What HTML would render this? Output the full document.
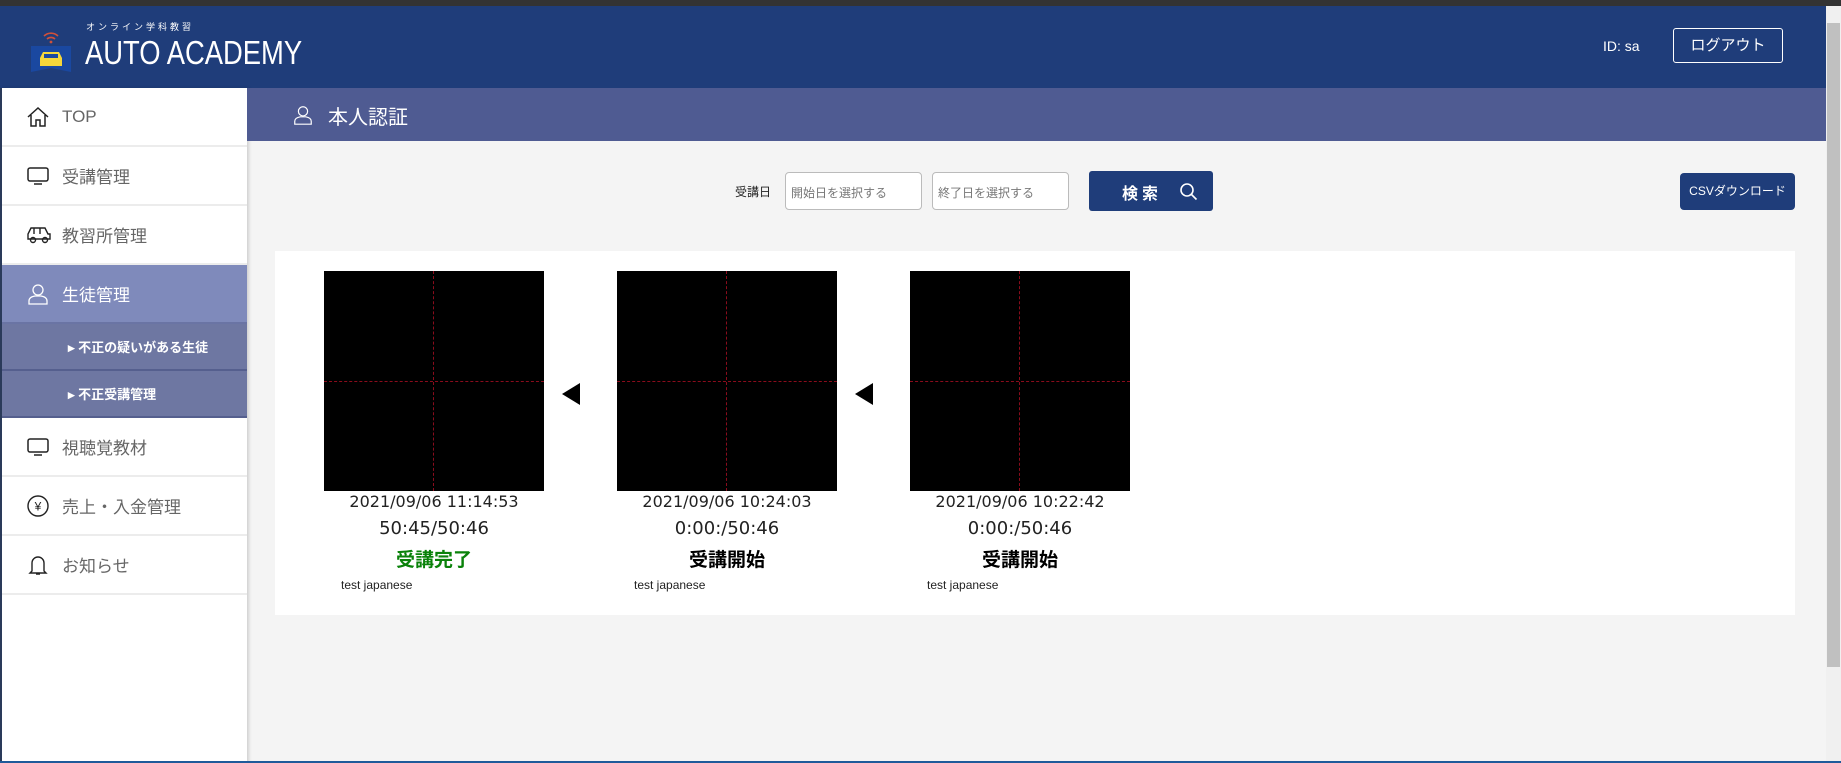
<!DOCTYPE html>
<html><head><meta charset="utf-8"><style>
*{box-sizing:border-box;margin:0;padding:0}
body{width:1841px;height:763px;overflow:hidden;background:#f4f4f4;font-family:"Liberation Sans","Noto Sans CJK JP",sans-serif;position:relative}
.a{position:absolute}
.topbar{left:0;top:0;width:1841px;height:6px;background:#333}
.header{left:0;top:6px;width:1826px;height:82px;background:#1f3d7a}
.side{left:0;top:88px;width:247px;height:675px;background:#fff;border-left:2px solid #2a3a5a;box-shadow:2px 0 3px rgba(0,0,0,.15)}
.item{position:absolute;left:0;width:245px;height:59px;border-bottom:2px solid #ececec;color:#666;font-size:17px;display:flex;align-items:center}
.item svg{position:absolute;left:24px}
.item span{position:absolute;left:60px}
.sub{position:absolute;left:0;width:245px;height:47px;background:#6e77a2;border-bottom:2px solid #555f8e;color:#fff;font-size:13px;font-weight:bold;display:flex;align-items:center}
.sub span{position:absolute;left:66px}
.title{left:247px;top:88px;width:1579px;height:53px;background:#4f5b92;color:#fff;font-size:20px}
.img{width:220px;height:220px;background:#000;top:271px}
.img:before{content:"";position:absolute;left:109px;top:0;height:220px;border-left:1px dashed #8a0c1c}
.img:after{content:"";position:absolute;top:110px;left:0;width:220px;border-top:1px dashed #8a0c1c}
.cap{width:220px;text-align:center;color:#222;font-family:"DejaVu Sans","Noto Sans CJK JP",sans-serif}
.arrow{width:0;height:0;border-top:11px solid transparent;border-bottom:11px solid transparent;border-right:18px solid #000;top:383px}
</style></head><body>
<div class="a topbar"></div>
<div class="a header">
 <svg class="a" style="left:28px;top:20px" width="46" height="50" viewBox="0 0 46 50">
  <path d="M16 10 a10 10 0 0 1 14 0 M19 13 a6 6 0 0 1 8 0" stroke="#d0503a" stroke-width="1.6" fill="none"/><circle cx="23" cy="16" r="1.4" fill="#d0503a"/>
  <path d="M3 20 h40 v26 l-20 -4 l-20 4z" fill="#1a48a0"/>
  <path d="M12 32 l3 -6 h16 l3 6 v8 h-22z" fill="#f5d63a"/><rect x="16" y="28" width="14" height="4" fill="#1a48a0"/>
 </svg>
 <div class="a" style="left:86px;top:14px;color:#fff;font-size:9px;letter-spacing:3px">オンライン学科教習</div>
 <div class="a" style="left:85px;top:28px;color:#fff;font-size:33px;font-weight:300;transform:scaleX(0.83);transform-origin:0 0">AUTO ACADEMY</div>
 <div class="a" style="left:1603px;top:32px;color:#fff;font-size:14px">ID: sa</div>
 <div class="a" style="left:1673px;top:22px;width:110px;height:35px;border:1px solid #fff;border-radius:3px;color:#fff;font-size:15px;text-align:center;line-height:33px">ログアウト</div>
</div>
<div class="a side">
 <div class="item" style="top:0"><svg width="24" height="22" viewBox="0 0 24 22" fill="none" stroke="#222" stroke-width="1.5"><path d="M2 11 L12 2 L22 11 M5 9 v11 h5 v-6 h4 v6 h5 v-11"/></svg><span>TOP</span></div>
 <div class="item" style="top:59px"><svg width="24" height="22" viewBox="0 0 24 22" fill="none" stroke="#222" stroke-width="1.5"><rect x="2" y="3" width="20" height="13" rx="2"/><path d="M8 19 h8"/></svg><span>受講管理</span></div>
 <div class="item" style="top:118px"><svg width="26" height="22" viewBox="0 0 26 22" fill="none" stroke="#222" stroke-width="1.4"><path d="M2 15 v-5 l3 -6 h14 l3 6 h2 v5z M8 4 v6 M14 4 v6"/><circle cx="7" cy="16" r="2.5"/><circle cx="19" cy="16" r="2.5"/></svg><span>教習所管理</span></div>
 <div class="item" style="top:177px;background:#7f8abb;color:#fff;border-bottom:2px solid #6a74a4"><svg width="24" height="24" viewBox="0 0 24 24" fill="none" stroke="#fff" stroke-width="1.3"><circle cx="12" cy="8" r="5"/><path d="M3 22 v-3 q0 -4 6 -5 h6 q6 1 6 5 v3z"/></svg><span>生徒管理</span></div>
 <div class="sub" style="top:236px"><span>▸ 不正の疑いがある生徒</span></div>
 <div class="sub" style="top:283px"><span>▸ 不正受講管理</span></div>
 <div class="item" style="top:330px"><svg width="24" height="22" viewBox="0 0 24 22" fill="none" stroke="#222" stroke-width="1.5"><rect x="2" y="3" width="20" height="13" rx="2"/><path d="M8 19 h8"/></svg><span>視聴覚教材</span></div>
 <div class="item" style="top:389px"><svg width="24" height="24" viewBox="0 0 24 24" fill="none" stroke="#222" stroke-width="1.4"><circle cx="12" cy="12" r="10"/><text x="12" y="16.5" font-size="12" text-anchor="middle" fill="#222" stroke="none">¥</text></svg><span>売上・入金管理</span></div>
 <div class="item" style="top:448px"><svg width="24" height="24" viewBox="0 0 24 24" fill="none" stroke="#222" stroke-width="1.4"><path d="M6 18 v-8 a6 6 0 0 1 12 0 v8 l2 2 h-16z M10 21 h4"/></svg><span>お知らせ</span></div>
</div>
<div class="a title">
 <svg class="a" style="left:45px;top:15px" width="22" height="24" viewBox="0 0 24 24" fill="none" stroke="#fff" stroke-width="1.3"><circle cx="12" cy="8" r="5"/><path d="M3 22 v-3 q0 -4 6 -5 h6 q6 1 6 5 v3z"/></svg>
 <div class="a" style="left:81px;top:13px">本人認証</div>
</div>
<div class="a" style="left:735px;top:183px;font-size:12px;color:#222">受講日</div>
<div class="a" style="left:785px;top:172px;width:137px;height:38px;background:#fff;border:1px solid #bbb;border-radius:4px;font-size:12px;color:#777;padding:11px 5px">開始日を選択する</div>
<div class="a" style="left:932px;top:172px;width:137px;height:38px;background:#fff;border:1px solid #bbb;border-radius:4px;font-size:12px;color:#777;padding:11px 5px">終了日を選択する</div>
<div class="a" style="left:1089px;top:171px;width:124px;height:40px;background:#1f3d7a;border-radius:3px;color:#fff;font-size:16px;font-weight:bold;letter-spacing:4px;padding:9px 0 0 33px">検索
 <svg class="a" style="left:90px;top:11px" width="20" height="20" viewBox="0 0 20 20" fill="none" stroke="#fff" stroke-width="1.6"><circle cx="8" cy="8" r="6"/><path d="M12.5 12.5 l5 5"/></svg></div>
<div class="a" style="left:1680px;top:173px;width:115px;height:37px;background:#1f3d7a;border-radius:4px;color:#fff;font-size:12px;text-align:center;line-height:37px">CSVダウンロード</div>
<div class="a" style="left:275px;top:251px;width:1520px;height:364px;background:#fff"></div>
<div class="a img" style="left:324px"></div>
<div class="a img" style="left:617px"></div>
<div class="a img" style="left:910px"></div>
<div class="a arrow" style="left:562px"></div>
<div class="a arrow" style="left:855px"></div>
<div class="a cap" style="left:324px;top:492px;font-size:16px">2021/09/06 11:14:53</div>
<div class="a cap" style="left:324px;top:518px;font-size:18px">50:45/50:46</div>
<div class="a cap" style="left:324px;top:545px;font-size:19px;font-weight:bold;color:#0a820a">受講完了</div>
<div class="a" style="left:341px;top:578px;font-size:12px;color:#222">test japanese</div>
<div class="a cap" style="left:617px;top:492px;font-size:16px">2021/09/06 10:24:03</div>
<div class="a cap" style="left:617px;top:518px;font-size:18px">0:00:/50:46</div>
<div class="a cap" style="left:617px;top:545px;font-size:19px;font-weight:bold;color:#000">受講開始</div>
<div class="a" style="left:634px;top:578px;font-size:12px;color:#222">test japanese</div>
<div class="a cap" style="left:910px;top:492px;font-size:16px">2021/09/06 10:22:42</div>
<div class="a cap" style="left:910px;top:518px;font-size:18px">0:00:/50:46</div>
<div class="a cap" style="left:910px;top:545px;font-size:19px;font-weight:bold;color:#000">受講開始</div>
<div class="a" style="left:927px;top:578px;font-size:12px;color:#222">test japanese</div>
<div class="a" style="left:1826px;top:6px;width:15px;height:757px;background:#f0f0f0"></div>
<div class="a" style="left:1827px;top:23px;width:13px;height:644px;background:#c0c0c0"></div>
<div class="a" style="left:0;top:761px;width:1841px;height:2px;background:#1f5a9a"></div>
</body></html>
